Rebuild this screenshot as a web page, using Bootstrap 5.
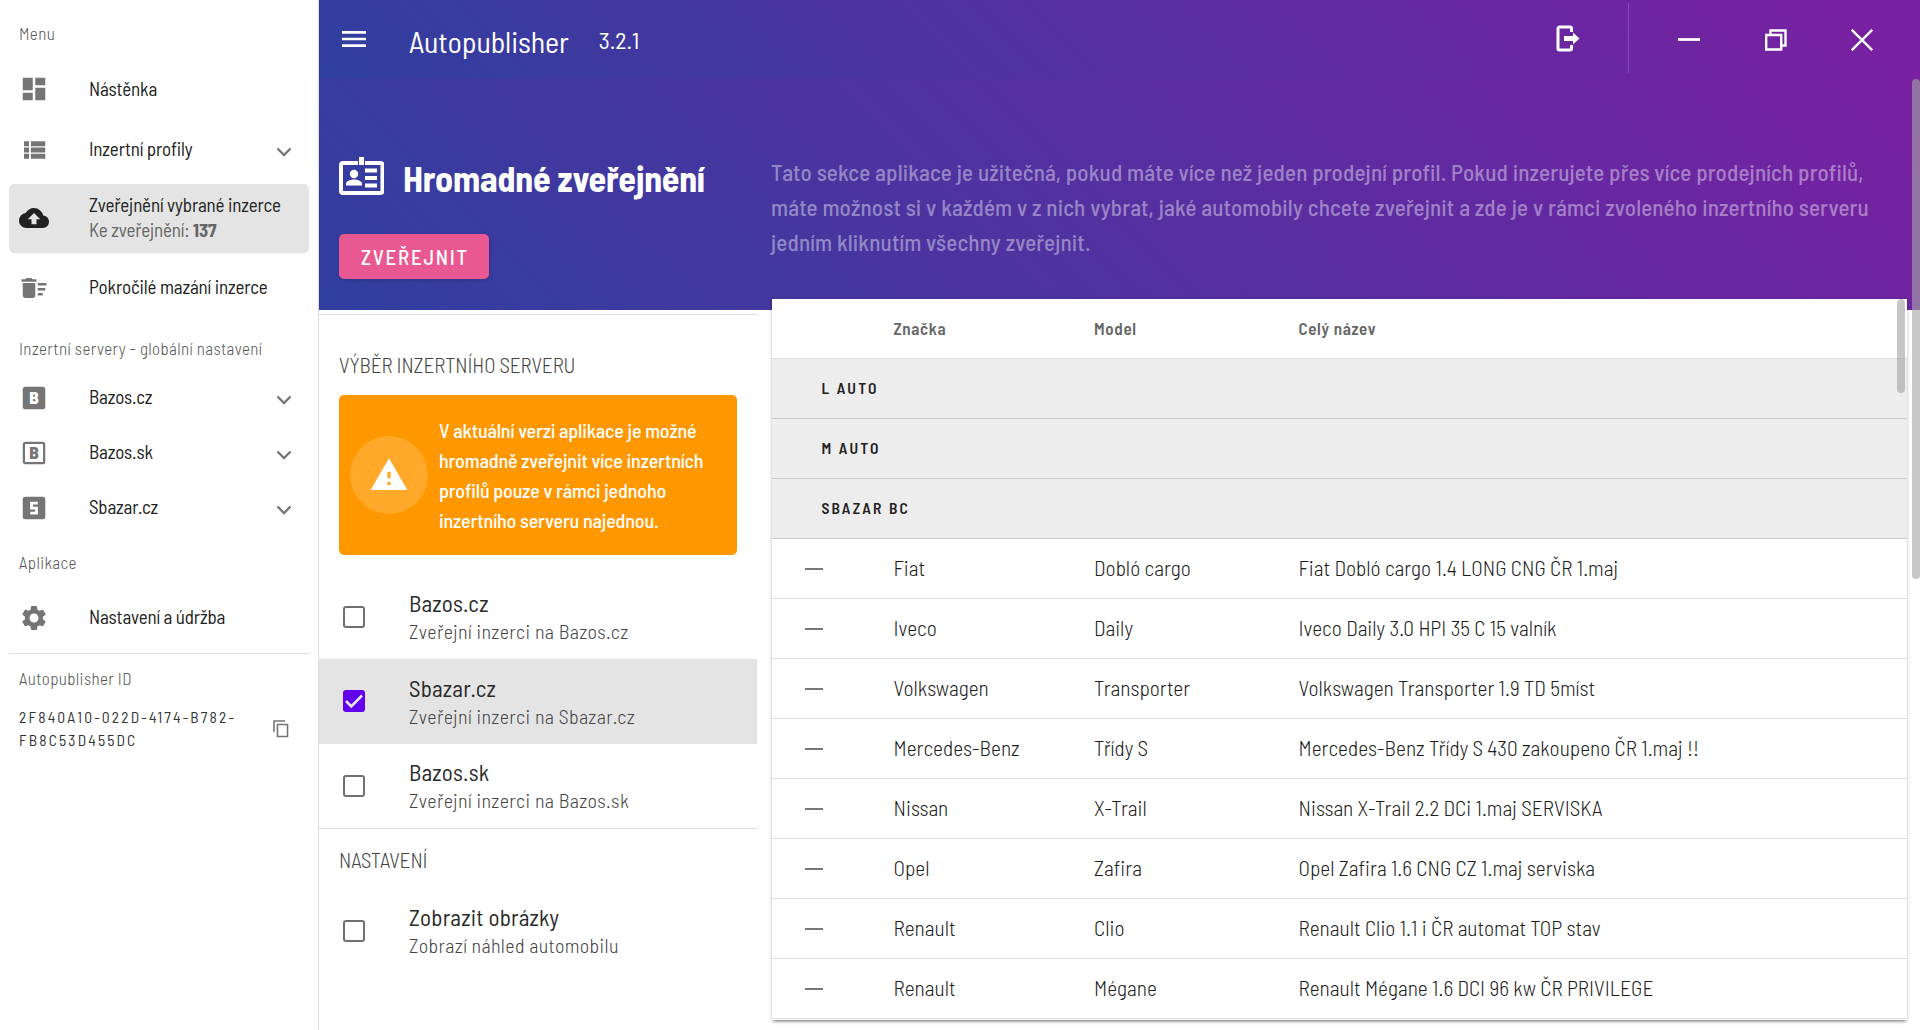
<!DOCTYPE html>
<html lang="cs">
<head>
<meta charset="utf-8">
<meta name="viewport" content="width=device-width, initial-scale=1">
<title>Autopublisher</title>
<link href="https://cdn.jsdelivr.net/npm/bootstrap@5.3.0/dist/css/bootstrap.min.css" rel="stylesheet">
<style>
body{font-family:"Barlow Semi Condensed","Roboto Condensed",Roboto,sans-serif;color:#212121;height:1030px;overflow:hidden;background:#fff}
svg{display:block;flex:none}
.side{width:319px;border-right:1px solid #dcdcdc;padding:13px 9px 0}
.side-label{font-size:17px;font-weight:300;letter-spacing:.39px;color:#555;padding-left:10px;padding-bottom:3px;height:44px;line-height:1.2}
.side-item{font-size:19px;letter-spacing:-.15px;height:55px;padding:0 17px 0 10px;line-height:25px;color:#212121}
.side-item>span,.side-item>div{padding-bottom:2px}
.side-item>svg:first-child{width:30px;height:30px;margin-right:40px;fill:#757575}
.side-item .chev{margin-top:4px}
.side-item.picked{background:#e4e4e4;border-radius:5px;height:69px;margin-top:6px;padding-bottom:1px}
.side-item.picked>svg:first-child{fill:#212121}
.h-first{height:64px}
.h-second{height:57px}
.h-last{height:69px}
.h-gear{height:51px}
.sub{color:#666}
.uuid{font-size:15.5px;letter-spacing:2.17px;line-height:22.5px;padding-left:10px;color:#333}
.topbar{height:79px;background:linear-gradient(45deg,#303f9f,#7b1fa2);color:#fff}
.hero{height:310px;background:linear-gradient(45deg,#303f9f,#7b1fa2)}
.brand{font-size:30px;letter-spacing:-.1px;margin-left:39px;padding-top:2px;line-height:1.2}
.version{font-size:24px;letter-spacing:-.1px;margin-left:30px;padding-top:2px;line-height:1.2}
.vline{width:1px;height:70px;background:rgba(255,255,255,.17)}
.hero-left{width:452px;padding:77px 0 0 20px}
.hero-title{font-size:36px;font-weight:700;letter-spacing:-.16px;line-height:43px;color:#fff;margin-left:19px}
.btn-publish{width:150px;height:45px;margin-top:35px;background:#ea5891;color:#fff;font-size:21px;font-weight:500;letter-spacing:1.7px;border:0;border-radius:5px;padding:0 0 0 2px;box-shadow:0 1px 3px rgba(0,0,0,.2)}
.intro{font-size:23px;font-weight:500;letter-spacing:.14px;line-height:35px;color:rgba(255,255,255,.42);padding-top:76px;white-space:nowrap}
.left{width:438px;padding-top:4px}
.rule{height:1px;background:#dedede}
.cap-label{font-size:21px;font-weight:300;letter-spacing:-.07px;color:#444;padding-left:20px;line-height:25px}
.note{margin-left:20px;width:398px;height:160px;background:#ff9800;border-radius:5px;color:#fff;font-size:20px;font-weight:500;letter-spacing:-.15px;line-height:30px;padding-left:11px}
.note-ic{width:78px;height:78px;background:rgba(255,255,255,.16);margin-right:11px;flex:none}
.opt{height:84.5px;padding-left:24px;gap:44px}
.opt>div{padding-top:1px}
.opt-t{font-size:23px;letter-spacing:.2px;line-height:28px;font-weight:400;color:#2a2a2a}
.opt-s{font-size:20px;letter-spacing:.37px;font-weight:300;line-height:28px;color:#444}
.opt.on{background:#e4e4e4}
.tick{width:22px;height:22px;border:2.5px solid #707070;border-radius:3px;flex:none}
.tick.full{border:0;background:#6200ee}
.sheet{width:1135px;height:721px;margin:-11px 0 0 15px;background:#fff;box-shadow:0 3px 2px -2px rgba(0,0,0,.3),0 2px 3px rgba(0,0,0,.18),0 1px 5px rgba(0,0,0,.1);position:relative}
.car{display:grid;grid-template-columns:121.5px 200.5px 204.5px 1fr;height:60px;align-items:center;border-bottom:1px solid #dedede;font-size:21.3px;font-weight:300;letter-spacing:.03px;color:#1c1c1c}
.car>span{padding-bottom:2px}
.car.hd{font-size:17px;font-weight:600;letter-spacing:.65px;color:#666}
.car.hd>span{padding-bottom:0}
.grp{height:60px;background:#ededed;border-bottom:1px solid #cbcbcb;padding:0 0 2px 49.5px;font-size:15.5px;font-weight:600;letter-spacing:2.2px;color:#212121}
.dash{width:17.5px;height:2px;background:#777;margin-left:33px}
.thumb{position:absolute;background:rgba(164,164,164,.62);width:8px;border-radius:4px}
.thumb.in-sheet{right:2px;top:0;height:94px}
.thumb.in-page{right:0;top:79px;height:500px}
</style>
<script src="https://cdn.jsdelivr.net/npm/bootstrap@5.3.0/dist/js/bootstrap.bundle.min.js"></script>
</head>
<body class="d-flex">
<nav class="side flex-shrink-0">
  <div class="side-label d-flex align-items-center">Menu</div>
  <div class="side-item h-first d-flex align-items-center"><svg viewBox="0 0 24 24"><path d="M3 13h8V3H3v10zm0 8h8v-6H3v6zm10 0h8V11h-8v10zm0-18v6h8V3h-8z"/></svg><span>Nástěnka</span></div>
  <div class="side-item h-second d-flex align-items-center"><svg viewBox="0 0 24 24"><path d="M4 5h4v4H4zM9.500 5h11.500v4H9.500zM4 10h4v4H4zM9.500 10h11.500v4H9.500zM4 15h4v4H4zM9.500 15h11.500v4H9.500z"/></svg><span>Inzertní profily</span><svg class="chev ms-auto" width="16" height="10" viewBox="0 0 16 10"><path d="M1.500 1.500 8 8l6.500-6.500" fill="none" stroke="#757575" stroke-width="2.300"/></svg></div>
  <div class="side-item picked d-flex align-items-center"><svg viewBox="0 0 24 24"><path d="M19.350 10.040A7.490 7.490 0 0 0 12 4C9.110 4 6.600 5.640 5.350 8.040A5.994 5.994 0 0 0 0 14c0 3.310 2.690 6 6 6h13c2.760 0 5-2.240 5-5 0-2.640-2.050-4.780-4.650-4.960zM14 13v4h-4v-4H7l5-5 5 5h-3z"/></svg><div><div>Zveřejnění vybrané inzerce</div><div class="sub">Ke zveřejnění: <b>137</b></div></div></div>
  <div class="side-item h-last d-flex align-items-center"><svg viewBox="0 0 24 24"><path d="M15 16h4v2h-4zm0-8h7v2h-7zm0 4h6v2h-6zM3 18c0 1.100.9 2 2 2h6c1.100 0 2-.9 2-2V8H3v10zM14 5h-3l-1-1H6L5 5H2v2h12z"/></svg><span>Pokročilé mazání inzerce</span></div>
  <div class="side-label d-flex align-items-center pt-2" style="height:48px">Inzertní servery - globální nastavení</div>
  <div class="side-item d-flex align-items-center"><svg viewBox="0 0 24 24"><rect x="3" y="3" width="18" height="18" rx="2"/><text x="12" y="17" text-anchor="middle" font-family="Barlow Semi Condensed,Roboto" font-size="14" font-weight="800" letter-spacing="0" fill="#fff">B</text></svg><span>Bazos.cz</span><svg class="chev ms-auto" width="16" height="10" viewBox="0 0 16 10"><path d="M1.500 1.500 8 8l6.500-6.500" fill="none" stroke="#757575" stroke-width="2.300"/></svg></div>
  <div class="side-item d-flex align-items-center"><svg viewBox="0 0 24 24"><rect x="3.900" y="3.900" width="16.200" height="16.200" rx="1.200" fill="none" stroke="#757575" stroke-width="1.800"/><text x="12" y="17" text-anchor="middle" font-family="Barlow Semi Condensed,Roboto" font-size="14" font-weight="800" letter-spacing="0">B</text></svg><span>Bazos.sk</span><svg class="chev ms-auto" width="16" height="10" viewBox="0 0 16 10"><path d="M1.500 1.500 8 8l6.500-6.500" fill="none" stroke="#757575" stroke-width="2.300"/></svg></div>
  <div class="side-item d-flex align-items-center"><svg viewBox="0 0 24 24"><rect x="3" y="3" width="18" height="18" rx="2"/><path d="M15 8h-5v4h4v4H9" fill="none" stroke="#fff" stroke-width="2.200"/></svg><span>Sbazar.cz</span><svg class="chev ms-auto" width="16" height="10" viewBox="0 0 16 10"><path d="M1.500 1.500 8 8l6.500-6.500" fill="none" stroke="#757575" stroke-width="2.300"/></svg></div>
  <div class="side-label d-flex align-items-center" style="height:57px">Aplikace</div>
  <div class="side-item h-gear d-flex align-items-center"><svg viewBox="0 0 24 24"><path d="M19.140 12.940c.04-.3.060-.61.060-.94 0-.32-.02-.64-.07-.94l2.030-1.580c.18-.14.230-.41.120-.61l-1.920-3.320c-.12-.22-.37-.29-.59-.22l-2.390.960c-.5-.38-1.030-.7-1.620-.94L14.400 2.810c-.04-.24-.24-.41-.48-.41h-3.840c-.24 0-.43.170-.47.410l-.36 2.540c-.59.240-1.130.570-1.620.940l-2.390-.96c-.22-.08-.47 0-.59.220L2.740 8.870c-.12.210-.08.470.12.610l2.030 1.580c-.05.3-.09.630-.09.940s.02.640.07.940l-2.030 1.580c-.18.140-.23.410-.12.610l1.920 3.320c.12.220.37.290.59.220l2.390-.96c.5.380 1.030.7 1.620.940l.36 2.540c.05.240.240.410.480.410h3.840c.24 0 .44-.17.470-.41l.36-2.540c.59-.24 1.130-.56 1.620-.94l2.390.960c.22.080.470 0 .59-.22l1.920-3.320c.12-.22.070-.47-.12-.61l-2.010-1.580zM12 15.600c-1.980 0-3.600-1.620-3.600-3.600s1.620-3.600 3.600-3.600 3.600 1.620 3.600 3.600-1.620 3.600-3.600 3.600z"/></svg><span>Nastavení a údržba</span></div>
  <div class="rule" style="margin-top:10px"></div>
  <div class="side-label d-flex align-items-center" style="height:52px">Autopublisher ID</div>
  <div class="d-flex align-items-center justify-content-between">
    <div class="uuid">2F840A10-022D-4174-B782-<br>FB8C53D455DC</div>
    <svg class="me-3" width="24" height="24" viewBox="0 0 24 24"><path d="M4 14V3h11M7.500 6.500h10v12h-10z" transform="translate(1 1)" fill="none" stroke="#757575" stroke-width="1.600"/></svg>
  </div>
</nav>

<main class="flex-grow-1 position-relative">
  <div class="hero">
    <header class="topbar d-flex align-items-center">
      <svg style="margin:0 0 1px 19px" width="32" height="32" viewBox="0 0 24 24" fill="#fff"><path d="M3 18h18v-2H3v2zm0-5h18v-2H3v2zm0-7v2h18V6H3z"/></svg>
      <div class="brand">Autopublisher</div><div class="version">3.2.1</div>
      <div class="ms-auto d-flex align-items-center">
        <svg style="margin-bottom:3px" width="26" height="28" viewBox="0 0 26 28"><path d="M17.500 8V4.500a1.500 1.500 0 0 0-1.500-1.500H5.500A1.500 1.500 0 0 0 4 4.500v20A1.500 1.500 0 0 0 5.500 26H16a1.500 1.500 0 0 0 1.500-1.500V21" fill="none" stroke="#fff" stroke-width="3"/><path d="M10 12h9V8.500l6.500 6-6.500 6V17h-9z" fill="#fff"/></svg>
        <div class="vline mb-1" style="margin-left:48px"></div>
        <svg style="margin-left:49px" width="22" height="22" viewBox="0 0 22 22"><path d="M0 10.500h22" stroke="#fff" stroke-width="2.800"/></svg>
        <svg style="margin-left:65px" width="22" height="22" viewBox="0 0 22 22"><path d="M1.200 6h15v14.500h-15zM5.500 6V1.500h15v15H17" fill="none" stroke="#fff" stroke-width="2.400"/></svg>
        <svg style="margin:0 47px 0 64px" width="22" height="22" viewBox="0 0 22 22"><path d="m.8.8 20.400 20.400m0-20.400L.8 21.200" stroke="#fff" stroke-width="2.400"/></svg>
      </div>
    </header>
    <div class="d-flex">
      <div class="hero-left flex-shrink-0">
        <div class="d-flex align-items-center">
          <svg style="margin-bottom:1px" width="45" height="40" viewBox="0 0 45 40"><path d="M19 6H4a2 2 0 0 0-2 2v26a2 2 0 0 0 2 2h37.500a2 2 0 0 0 2-2V8a2 2 0 0 0-2-2H26" fill="none" stroke="#fff" stroke-width="4"/><path d="M20 0h5v8h-5zM26 11.500h12v4H26zm0 7.500h12v4H26zm0 7.500h12v4H26zM7 28.500V27c0-3 4-4.500 8-4.500s8 1.500 8 4.500v1.500z" fill="#fff"/><circle cx="15" cy="17" r="4.200" fill="#fff"/></svg>
          <div class="hero-title">Hromadné zveřejnění</div>
        </div>
        <button class="btn btn-publish d-block">ZVEŘEJNIT</button>
      </div>
      <div class="intro">Tato sekce aplikace je užitečná, pokud máte více než jeden prodejní profil. Pokud inzerujete přes více prodejních profilů,<br>máte možnost si v každém v z nich vybrat, jaké automobily chcete zveřejnit a zde je v rámci zvoleného inzertního serveru<br>jedním kliknutím všechny zveřejnit.</div>
    </div>
  </div>

  <div class="d-flex align-items-start">
    <section class="left flex-shrink-0">
      <div class="rule"></div>
      <div class="cap-label" style="padding-top:37px;height:80px">VÝBĚR INZERTNÍHO SERVERU</div>
      <div class="note d-flex align-items-center">
        <div class="note-ic rounded-circle d-flex align-items-center justify-content-center"><svg width="40" height="40" viewBox="0 0 24 24" fill="#fff"><path d="M1 21h22L12 2 1 21zm12-3h-2v-2h2v2zm0-4h-2v-4h2v4z"/></svg></div>
        <div>V aktuální verzi aplikace je možné<br>hromadně zveřejnit více inzertních<br>profilů pouze v rámci jednoho<br>inzertního serveru najednou.</div>
      </div>
      <div style="height:19.500px"></div>
      <div class="opt d-flex align-items-center"><span class="tick"></span><div><div class="opt-t">Bazos.cz</div><div class="opt-s">Zveřejní inzerci na Bazos.cz</div></div></div>
      <div class="opt on d-flex align-items-center"><span class="tick full"><svg width="22" height="22" viewBox="0 0 22 22"><path d="m3 11 5.300 5.300L19 5.500" fill="none" stroke="#e8e8e8" stroke-width="2.600"/></svg></span><div><div class="opt-t">Sbazar.cz</div><div class="opt-s">Zveřejní inzerci na Sbazar.cz</div></div></div>
      <div class="opt d-flex align-items-center"><span class="tick"></span><div><div class="opt-t">Bazos.sk</div><div class="opt-s">Zveřejní inzerci na Bazos.sk</div></div></div>
      <div class="rule"></div>
      <div class="cap-label" style="padding-top:18px;height:59.500px">NASTAVENÍ</div>
      <div class="opt d-flex align-items-center"><span class="tick"></span><div><div class="opt-t">Zobrazit obrázky</div><div class="opt-s">Zobrazí náhled automobilu</div></div></div>
    </section>
    <section class="sheet flex-shrink-0">
      <div class="car hd"><span></span><span>Značka</span><span>Model</span><span>Celý název</span></div>
      <div class="grp d-flex align-items-center">L AUTO</div>
      <div class="grp d-flex align-items-center">M AUTO</div>
      <div class="grp d-flex align-items-center">SBAZAR BC</div>
      <div class="car"><i class="dash"></i><span>Fiat</span><span>Dobló cargo</span><span>Fiat Dobló cargo 1.4 LONG CNG ČR 1.maj</span></div>
      <div class="car"><i class="dash"></i><span>Iveco</span><span>Daily</span><span>Iveco Daily 3.0 HPI 35 C 15 valník</span></div>
      <div class="car"><i class="dash"></i><span>Volkswagen</span><span>Transporter</span><span>Volkswagen Transporter 1.9 TD 5míst</span></div>
      <div class="car"><i class="dash"></i><span>Mercedes-Benz</span><span>Třídy S</span><span>Mercedes-Benz Třídy S 430 zakoupeno ČR 1.maj !!</span></div>
      <div class="car"><i class="dash"></i><span>Nissan</span><span>X-Trail</span><span>Nissan X-Trail 2.2 DCi 1.maj SERVISKA</span></div>
      <div class="car"><i class="dash"></i><span>Opel</span><span>Zafira</span><span>Opel Zafira 1.6 CNG CZ 1.maj serviska</span></div>
      <div class="car"><i class="dash"></i><span>Renault</span><span>Clio</span><span>Renault Clio 1.1 i ČR automat TOP stav</span></div>
      <div class="car"><i class="dash"></i><span>Renault</span><span>Mégane</span><span>Renault Mégane 1.6 DCI 96 kw ČR PRIVILEGE</span></div>
      <div class="thumb in-sheet"></div>
    </section>
  </div>
  <div class="thumb in-page"></div>
</main>
</body>
</html>
